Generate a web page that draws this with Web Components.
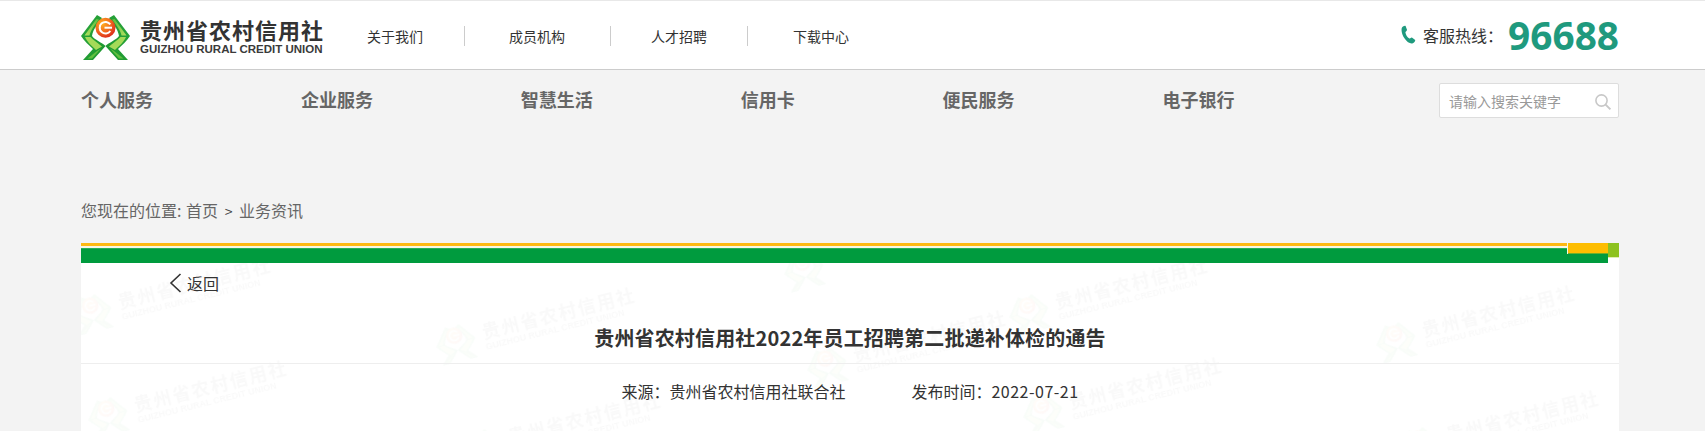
<!DOCTYPE html>
<html lang="zh-CN">
<head>
<meta charset="utf-8">
<title>贵州省农村信用社</title>
<style>
html,body{margin:0;padding:0;height:431px;overflow:hidden;background:#f3f3f3;font-family:"Noto Sans CJK SC","Open Sans",sans-serif}
</style>
</head>
<body>
<gz-header></gz-header>
<gz-nav></gz-nav>
<gz-crumb></gz-crumb>
<gz-article></gz-article>
<script>
const FONT='"Noto Sans CJK SC","Microsoft YaHei",sans-serif';
function el(name,html){
  customElements.define(name,class extends HTMLElement{
    constructor(){super();this.attachShadow({mode:'open'}).innerHTML=html;}
  });
}
el('gz-logo',`<style>:host{display:block;width:49px;height:45px}svg{display:block;width:100%;height:100%}</style>
<svg viewBox="0 0 49 45">
<defs>
<linearGradient id="g" x1="0" y1="0" x2="1" y2="1"><stop offset="0" stop-color="#2aa63c"/><stop offset="1" stop-color="#1c962f"/></linearGradient>
<linearGradient id="u" x1="1" y1="0" x2="0" y2="1"><stop offset="0" stop-color="#5cbc3c"/><stop offset="1" stop-color="#b2e060"/></linearGradient>
<radialGradient id="r" cx=".35" cy=".3" r=".8"><stop offset="0" stop-color="#ffb020"/><stop offset=".55" stop-color="#f0651e"/><stop offset="1" stop-color="#d8201c"/></radialGradient>
<g id="h">
<path fill="url(#g)" d="M16 0 L0 21 C3 26 8 30 12 34 L2 45 L12 45 L24.6 31 C20 27 14 25 11 21 C12 14 17 9 21 3 Z"/>
<path fill="url(#u)" d="M15.5 4 L18 4.5 C14 10 9.5 15 8.5 20.5 L3.5 20.5 Z"/>
<path fill="#a5da58" d="M4 22 L9.5 22 C12 25 17 28 21 31.5 L15 35 C11 31 6 27 4 22 Z"/>
<path fill="#62c040" d="M6.5 43.5 L11 43.5 L20 33.5 L16 36 Z"/>
</g>
</defs>
<use href="#h"/>
<use href="#h" transform="matrix(-1 0 0 1 49 0)"/>
<circle cx="24.5" cy="12.7" r="10" fill="url(#r)"/>
<path d="M29.3 9.4 A5.8 5.8 0 1 0 29.3 16" fill="none" stroke="#fff" stroke-width="2"/>
<rect x="23.5" y="11.7" width="7.5" height="2" fill="#fff"/>
</svg>`);

el('gz-header',`<style>
:host{display:flex;box-sizing:border-box;height:70px;background:#fff;border-top:1px solid #e8e8e8;border-bottom:1px solid #ccc;padding:0 86px 0 81px;align-items:center;color:#333;font-family:${FONT}}
.brand{display:flex;gap:10px;align-items:center;width:286px;margin-top:4px}
.names{width:184px;color:#333;margin-top:-3px}
.cn{font-size:22px;font-weight:700;line-height:26px;letter-spacing:1px;white-space:nowrap}
.en{font:700 11.5px/12px "Liberation Sans",sans-serif;white-space:nowrap;margin-top:1px;color:#3a3a3a}
nav{display:flex;font-size:14px;line-height:20px;color:#333;margin-top:2px}
nav a{border-left:1px solid #ccc;height:20px;white-space:nowrap}
nav a:first-child{border:0}
.hot{margin-left:auto;display:flex;align-items:center;font-size:16px;margin-top:-1px}
.hot svg{width:15px;height:19px;margin-right:7px}
.hot span{white-space:nowrap;line-height:24px;width:85px}
.num{font:700 38.8px/44px "Open Sans",sans-serif;color:#1f9a7e}
</style>
<div class="brand"><gz-logo></gz-logo><div class="names"><div class="cn">贵州省农村信用社</div><div class="en">GUIZHOU RURAL CREDIT UNION</div></div></div>
<nav><a style="padding-right:41px">关于我们</a><a style="padding:0 45px 0 44px">成员机构</a><a style="padding:0 40px 0 40px">人才招聘</a><a style="padding:0 0 0 45px">下载中心</a></nav>
<div class="hot"><svg viewBox="0 0 15 19"><path fill="#1f9a7e" d="M1 2.6 C2 1.2 3.6 .4 4.6 .9 L6 4.8 C6.1 5.6 4.6 6.4 4.4 7.2 C4.6 9.6 6.4 12.6 8.4 13.6 C9.4 13.6 10 12.2 10.9 12.4 L14.2 15 C14.5 16 13.2 17.6 11.8 18.3 C9.6 19.2 6 17.4 3.6 13.6 C1 9.6 -.2 5 1 2.6Z"/></svg><span>客服热线：</span><div class="num">96688</div></div>`);

el('gz-nav',`<style>
:host{display:flex;box-sizing:border-box;height:70px;padding:15px 86px 0 81px;align-items:flex-start;font-family:${FONT}}
ul{display:flex;gap:147.9px;list-style:none;margin:0;padding:0;font-size:18px;font-weight:700;color:#666;line-height:30px;margin-top:-1px}
li{white-space:nowrap}
.s{margin-left:auto;box-sizing:border-box;width:180px;height:35px;background:#fff;border:1px solid #ddd;border-radius:2px;display:flex;align-items:center;justify-content:space-between;padding:0 6px 0 9px;font-size:14px;color:#999;margin-top:-2px}
svg{width:18px;height:18px;margin-top:2px}
</style>
<ul><li>个人服务</li><li>企业服务</li><li>智慧生活</li><li>信用卡</li><li>便民服务</li><li>电子银行</li></ul>
<div class="s"><span>请输入搜索关键字</span><svg viewBox="0 0 18 18"><circle cx="7.5" cy="7.5" r="5.6" fill="none" stroke="#c8c8c8" stroke-width="1.6"/><path d="M11.6 11.6 L16.4 16.4" stroke="#c8c8c8" stroke-width="2"/></svg></div>`);

el('gz-crumb',`<style>
:host{display:block;box-sizing:border-box;height:103px;padding:58px 0 0 81px;font-size:16px;line-height:24px;color:#666;font-family:${FONT};white-space:nowrap}
b{font-weight:400;margin-left:1px}
i{font-style:normal;margin:0 3.5px;font-size:14px;color:#444}
</style>您现在的位置:<b> 首页</b><i> &gt; </i>业务资讯`);

el('gz-bar',`<style>
:host{display:block;height:20px;position:relative;background:#f7f7e4}
.y{height:3px;background:#fdb912}
.g{position:absolute;left:0;right:11px;top:5px;bottom:0;background:#009b3e;border-top:1px solid #27ad5a}
.c{position:absolute;right:11px;top:0;width:40px;height:10px;background:#fdbd00;border-bottom:1px solid #6fae2a;box-shadow:-1px 0 0 #f7f7e4}
.l{position:absolute;right:0;top:0;width:11px;height:14px;background:#8dc21f;box-shadow:0 1px 0 #dfeeb5}
.w{position:absolute;right:0;top:15px;width:11px;height:5px;background:#fff}
</style><div class="y"></div><div class="g"></div><div class="c"></div><div class="l"></div><div class="w"></div>`);

el('gz-mark',`<style>
:host{position:absolute;display:flex;align-items:center;gap:8px;width:190px;height:40px;margin:-20px 0 0 -20px;transform:rotate(-14deg);transform-origin:20px 20px;color:#000;font-family:${FONT};pointer-events:none;filter:blur(.4px)}
gz-logo{width:40px;height:37px;flex:none;opacity:.028}
.t{opacity:.022}
:host([logo-only]) .t{display:none}
.cn{font-size:18px;font-weight:700;line-height:21px;letter-spacing:1.7px;white-space:nowrap}
.en{font:700 9px/10px "Liberation Sans",sans-serif;white-space:nowrap}
</style><gz-logo></gz-logo><div class="t"><div class="cn">贵州省农村信用社</div><div class="en">GUIZHOU RURAL CREDIT UNION</div></div>`);

const marks=[[92,313],[456,343],[1029,313],[1396,341],[108,416],[482,448],[827,366],[1043,413],[1420,446]];
el('gz-article',`<style>
:host{display:block;position:relative;margin:0 86px 0 81px;height:188px;background:#fff;color:#333;font-family:${FONT};overflow:hidden}
.wm{position:absolute;inset:0;overflow:hidden}
.body{position:relative}
gz-bar{position:relative;z-index:1}
.back{display:flex;align-items:center;height:40px;padding-left:88px;font-size:16px;line-height:24px;gap:5px}
.back svg{width:13px;height:20px}
h1{margin:0;height:61px;box-sizing:border-box;padding-top:22px;border-bottom:1px solid #eee;text-align:center;font-size:20px;line-height:26px;font-weight:700;letter-spacing:.16px;color:#333}
.meta{display:flex;justify-content:center;gap:66px;font-size:16px;line-height:24px;padding-top:15px;white-space:nowrap}
.d{letter-spacing:.5px}
</style>
<div class="wm"><gz-mark logo-only style="left:723px;top:27px"></gz-mark>${marks.map(([x,y])=>`<gz-mark style="left:${x-81}px;top:${y-243}px"></gz-mark>`).join('')}</div>
<div class="body"><gz-bar></gz-bar>
<div class="back"><svg viewBox="0 0 13 20"><path d="M11.5 1 L2 10 L11.5 19" fill="none" stroke="#333" stroke-width="1.6"/></svg><span>返回</span></div>
<h1>贵州省农村信用社2022年员工招聘第二批递补体检的通告</h1>
<div class="meta"><span>来源：贵州省农村信用社联合社</span><span>发布时间：<span class="d">2022-07-21</span></span></div></div>`);
</script>
</body>
</html>
